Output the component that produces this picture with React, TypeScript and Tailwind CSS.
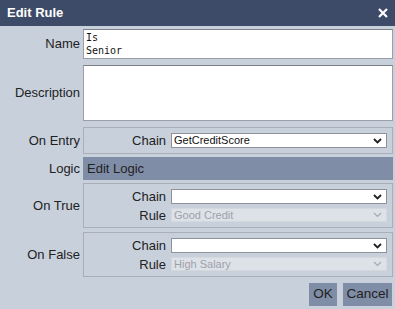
import React from "react";

function Chevron({ muted }: { muted?: boolean }) {
  return (
    <svg width="9" height="6" viewBox="0 0 9 6" className="shrink-0">
      <polyline
        points="1,1 4.5,4.5 8,1"
        fill="none"
        stroke={muted ? "#a4a9b1" : "#222"}
        strokeWidth={muted ? 1.2 : 1.8}
      />
    </svg>
  );
}

function Select({ value, disabled, h }: { value?: string; disabled?: boolean; h: string }) {
  return (
    <div
      className={`flex flex-1 items-center justify-between border pl-[2px] pr-[4px] text-[11px] leading-none ${h} ${
        disabled
          ? "border-[#d3d7de] bg-[#dde1e8] text-[#9da2aa]"
          : "border-[#8e939b] bg-white text-[#111]"
      }`}
    >
      <span>{value}</span>
      <Chevron muted={disabled} />
    </div>
  );
}

function Field({ label, children }: { label: string; children: React.ReactNode }) {
  return (
    <div className="flex items-center gap-[5px]">
      <span className="w-[82px] text-right text-[13px] leading-none">{label}</span>
      {children}
    </div>
  );
}

function Row({ label, className, children }: { label: string; className?: string; children: React.ReactNode }) {
  return (
    <div className={`flex items-center gap-[3px] ${className ?? ""}`}>
      <span className="w-[80px] shrink-0 text-right text-[13px]">{label}</span>
      {children}
    </div>
  );
}

export default function App() {
  return (
    <div className="flex h-[309px] w-[395px] flex-col bg-[#c8d0dc] font-['Liberation_Sans',Arial,sans-serif] text-[#222]">
      <div className="flex h-[26px] shrink-0 items-center justify-between bg-[#3e4b68] pl-[7px] pr-[7px] text-[13px] font-bold text-white">
        <span>Edit Rule</span>
        <svg width="10" height="10" viewBox="0 0 10 10">
          <path d="M1 1 L9 9 M9 1 L1 9" stroke="white" strokeWidth="2.2" />
        </svg>
      </div>

      <div className="flex flex-col pr-[2px]">
        <Row label="Name" className="mt-[3px]">
          <div className="h-[30px] flex-1 border border-[#9a9ea6] border-t-[#7d8189] bg-white px-[2px] pt-[1px] font-['DejaVu_Sans_Mono',monospace] text-[10px] leading-[13px] text-[#111]">
            Is
            <br />
            Senior
          </div>
        </Row>

        <Row label="Description" className="mt-[6px]">
          <div className="h-[56px] flex-1 border border-[#9a9ea6] border-t-[#7d8189] bg-white" />
        </Row>

        <Row label="On Entry" className="mt-[6px]">
          <div className="flex h-[27px] flex-1 flex-col justify-center border border-[#a9afb9] pr-[5px]">
            <Field label="Chain">
              <Select value="GetCreditScore" h="h-[15px]" />
            </Field>
          </div>
        </Row>

        <Row label="Logic" className="mt-[3px]">
          <div className="flex h-[23px] flex-1 items-center bg-[#808da7] pl-[4px] text-[13px]">
            Edit Logic
          </div>
        </Row>

        <Row label="On True" className="mt-[3px]">
          <div className="flex h-[45px] flex-1 flex-col justify-center gap-[4px] border border-[#a9afb9] pr-[5px]">
            <Field label="Chain">
              <Select h="h-[15px]" />
            </Field>
            <Field label="Rule">
              <Select value="Good Credit" disabled h="h-[14px]" />
            </Field>
          </div>
        </Row>

        <Row label="On False" className="mt-[4px]">
          <div className="flex h-[45px] flex-1 flex-col justify-center gap-[4px] border border-[#a9afb9] pr-[5px]">
            <Field label="Chain">
              <Select h="h-[15px]" />
            </Field>
            <Field label="Rule">
              <Select value="High Salary" disabled h="h-[14px]" />
            </Field>
          </div>
        </Row>

        <div className="mt-[6px] flex justify-end gap-[6px] pr-[1px]">
          <button className="flex h-[23px] w-[28px] items-center justify-center bg-[#808da7] text-[13.5px] text-[#222]">
            OK
          </button>
          <button className="flex h-[23px] w-[49px] items-center justify-center bg-[#808da7] text-[13.5px] text-[#222]">
            Cancel
          </button>
        </div>
      </div>
    </div>
  );
}
